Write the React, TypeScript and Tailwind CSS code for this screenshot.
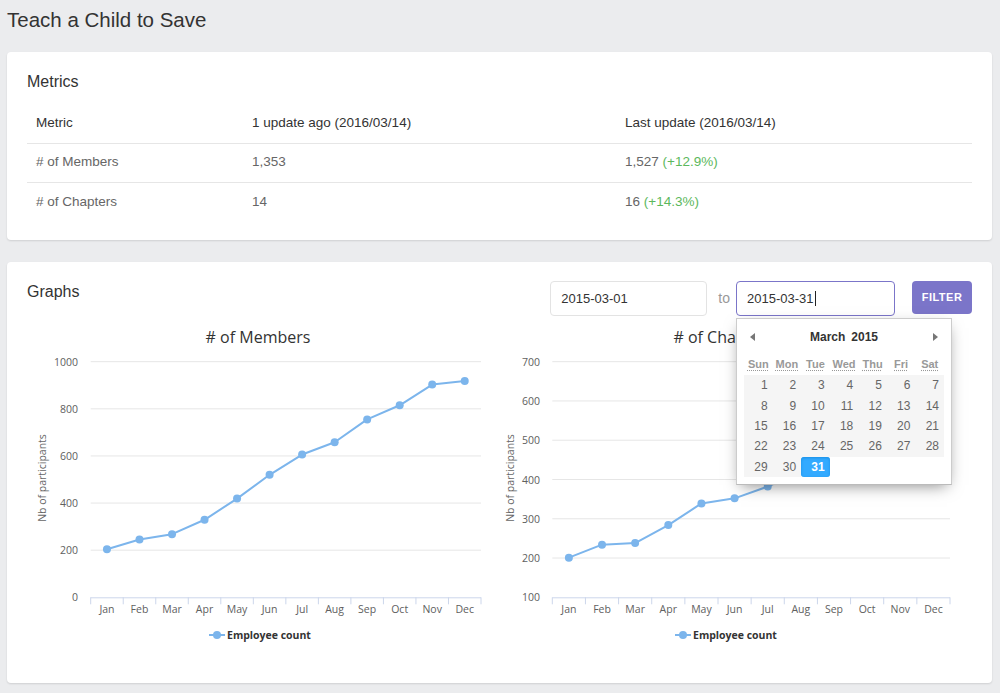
import React from "react"

const months = ["Jan", "Feb", "Mar", "Apr", "May", "Jun", "Jul", "Aug", "Sep", "Oct", "Nov", "Dec"]

type ChartProps = {
  title: string
  width: number
  plotLeft: number
  plotRight: number
  axisTitleX: number
  min: number
  max: number
  step: number
  data: number[]
}

const chartFont = "'Open Sans', 'DejaVu Sans', sans-serif"

function LineChart({title, width, plotLeft, plotRight, axisTitleX, min, max, step, data}: ChartProps) {
  const top = 43.7
  const bottom = 279.3
  const yOf = (v: number) => bottom - ((v - min) / (max - min)) * (bottom - top)
  const cw = (plotRight - plotLeft) / 12
  const xOf = (i: number) => plotLeft + cw * (i + 0.5)
  const ticks: number[] = []
  for (let v = min; v <= max; v += step) ticks.push(v)
  const points = data.map((v, i) => `${xOf(i)},${yOf(v)}`).join(" ")
  const center = width / 2

  return (
    <svg width={width} height={350} className="block shrink-0" style={{fontFamily: chartFont}}>
      <text x={center} y={25} textAnchor="middle" fontSize={16} fill="#333">{title}</text>

      {ticks.map((v) => (
        <g key={v}>
          {v !== min && <line x1={plotLeft} x2={plotRight} y1={yOf(v)} y2={yOf(v)} stroke="#e6e6e6" strokeWidth={1} />}
          <text x={51} y={yOf(v) + 4} textAnchor="end" fontSize={10.5} fill="#606060">{v}</text>
        </g>
      ))}

      <text
        x={axisTitleX}
        y={160}
        textAnchor="middle"
        fontSize={10.5}
        fill="#666"
        transform={`rotate(-90 ${axisTitleX} 160)`}
        dominantBaseline="middle"
      >
        Nb of participants
      </text>

      <line x1={plotLeft} x2={plotRight} y1={bottom + 0.5} y2={bottom + 0.5} stroke="#ccd6eb" strokeWidth={1} />
      {Array.from({length: 13}).map((_, i) => (
        <line key={i} x1={plotLeft + cw * i} x2={plotLeft + cw * i} y1={bottom} y2={bottom + 7} stroke="#ccd6eb" strokeWidth={1} />
      ))}
      {months.map((m, i) => (
        <text key={m} x={xOf(i)} y={295} textAnchor="middle" fontSize={10.5} fill="#606060">{m}</text>
      ))}

      <polyline points={points} fill="none" stroke="#7cb5ec" strokeWidth={2} strokeLinejoin="round" />
      {data.map((v, i) => (
        <circle key={i} cx={xOf(i)} cy={yOf(v)} r={4} fill="#7cb5ec" />
      ))}

      <g>
        <line x1={center - 49} x2={center - 33} y1={317} y2={317} stroke="#7cb5ec" strokeWidth={2} />
        <circle cx={center - 41} cy={317} r={4} fill="#7cb5ec" />
        <text x={center - 31} y={321} fontSize={10.5} fontWeight={700} fill="#333">Employee count</text>
      </g>
    </svg>
  )
}

const days = Array.from({length: 31}, (_, i) => i + 1)
const weekdays = [
  ["Sun", "Sunday"],
  ["Mon", "Monday"],
  ["Tue", "Tuesday"],
  ["Wed", "Wednesday"],
  ["Thu", "Thursday"],
  ["Fri", "Friday"],
  ["Sat", "Saturday"],
]

function DatePicker() {
  return (
    <div className="absolute left-0 top-[37px] z-20 w-[216px] border border-[#ccc] border-b-[#bbb] bg-white px-[7px] pt-[8px] pb-[7px] shadow-[0_5px_15px_-5px_rgba(0,0,0,0.5)]">
      <div className="relative flex h-[20px] items-center justify-center gap-[6px] text-[12px] font-bold text-[#333]">
        <svg width="6" height="8" viewBox="0 0 6 8" className="absolute left-[6px] top-[6px]">
          <path d="M5 0 L0 4 L5 8 Z" fill="#777" />
        </svg>
        <span>March</span>
        <span>2015</span>
        <svg width="6" height="8" viewBox="0 0 6 8" className="absolute right-[6px] top-[6px]">
          <path d="M1 0 L6 4 L1 8 Z" fill="#777" />
        </svg>
      </div>
      <div className="mt-[7px] grid grid-cols-7">
        {weekdays.map(([d, full]) => (
          <div key={d} className="flex h-[21px] items-center justify-center text-[11px] font-bold text-[#999]">
            <abbr title={full} className="underline decoration-dotted underline-offset-2">{d}</abbr>
          </div>
        ))}
      </div>
      <div className="grid grid-cols-7">
        {days.map((d) => (
          <div
            key={d}
            className={
              d === 31
                ? "flex h-[20.4px] items-center justify-end rounded-[3px] bg-[#33aaff] pr-[5px] text-[12px] font-bold text-white shadow-[inset_0_1px_3px_#178fe5]"
                : "flex h-[20.4px] items-center justify-end bg-[#f5f5f5] pr-[5px] text-[12px] text-[#666]"
            }
          >
            {d}
          </div>
        ))}
      </div>
    </div>
  )
}

export default function App() {
  const rows = [
    {name: "# of Members", prev: "1,353", last: "1,527", delta: "(+12.9%)"},
    {name: "# of Chapters", prev: "14", last: "16", delta: "(+14.3%)"},
  ]

  return (
    <div className="min-h-screen w-full bg-[#ebecee] px-[7px] pt-[8px] pb-[10px]" style={{fontFamily: "'Liberation Sans', Arial, sans-serif"}}>
      <h1 className="text-[20.5px] leading-[24px] text-[#333]">Teach a Child to Save</h1>

      <div className="mt-[20px] w-[985px] rounded-[4px] bg-white px-[20px] pt-[20px] pb-[19px] shadow-[0_1px_2px_rgba(0,0,0,0.12)]">
        <h3 className="text-[16px] leading-[19px] text-[#333]">Metrics</h3>
        <table className="mt-[13px] w-full border-collapse text-[13.5px]">
          <thead>
            <tr className="h-[39px] text-left text-[#333]">
              <th className="w-[216px] pl-[9px] font-normal">Metric</th>
              <th className="w-[373px] pl-[9px] font-normal">1 update ago (2016/03/14)</th>
              <th className="pl-[9px] font-normal">Last update (2016/03/14)</th>
            </tr>
          </thead>
          <tbody>
            {rows.map((r) => (
              <tr key={r.name} className="h-[39px] border-t border-[#e6e6e6] text-[#666]">
                <td className="pl-[9px]">{r.name}</td>
                <td className="pl-[9px]">{r.prev}</td>
                <td className="pl-[9px]">
                  {r.last} <span className="text-[#5cb85c]">{r.delta}</span>
                </td>
              </tr>
            ))}
          </tbody>
        </table>
      </div>

      <div className="mt-[22px] w-[985px] rounded-[4px] bg-white px-[20px] pt-[20px] pb-[15px] shadow-[0_1px_2px_rgba(0,0,0,0.12)]">
        <div className="flex h-[36px] items-start justify-between">
          <h3 className="text-[16px] leading-[19px] text-[#333]">Graphs</h3>
          <div className="-mt-px flex items-start">
            <div className="flex h-[35px] w-[157px] items-center rounded-[4px] border border-[#e3e3e3] px-[10px] text-[13px] text-[#333]">
              2015-03-01
            </div>
            <span className="ml-[11px] mr-[6px] leading-[35px] text-[14px] text-[#999]">to</span>
            <div className="relative">
              <div className="flex h-[35px] w-[159px] items-center rounded-[4px] border border-[#7b75c9] px-[10px] text-[13px] text-[#333]">
                2015-03-31
                <span className="ml-px inline-block h-[15px] w-px bg-[#222]" />
              </div>
              <DatePicker />
            </div>
            <button className="ml-[17px] h-[33px] w-[60px] rounded-[4px] bg-[#7b75c9] text-[11px] font-bold tracking-[0.5px] text-white">
              FILTER
            </button>
          </div>
        </div>

        <div className="flex">
          <LineChart
            title="# of Members"
            width={462}
            plotLeft={63.7}
            plotRight={454}
            axisTitleX={15.7}
            min={0}
            max={1000}
            step={200}
            data={[204, 245, 268, 329, 419, 520, 606, 658, 755, 815, 903, 918]}
          />
          <LineChart
            title="# of Chapters"
            width={470}
            plotLeft={63.3}
            plotRight={461}
            axisTitleX={21.7}
            min={100}
            max={700}
            step={100}
            data={[201, 234, 238, 284, 339, 352, 382, 420, 460, 500, 540, 570]}
          />
        </div>
      </div>
    </div>
  )
}
